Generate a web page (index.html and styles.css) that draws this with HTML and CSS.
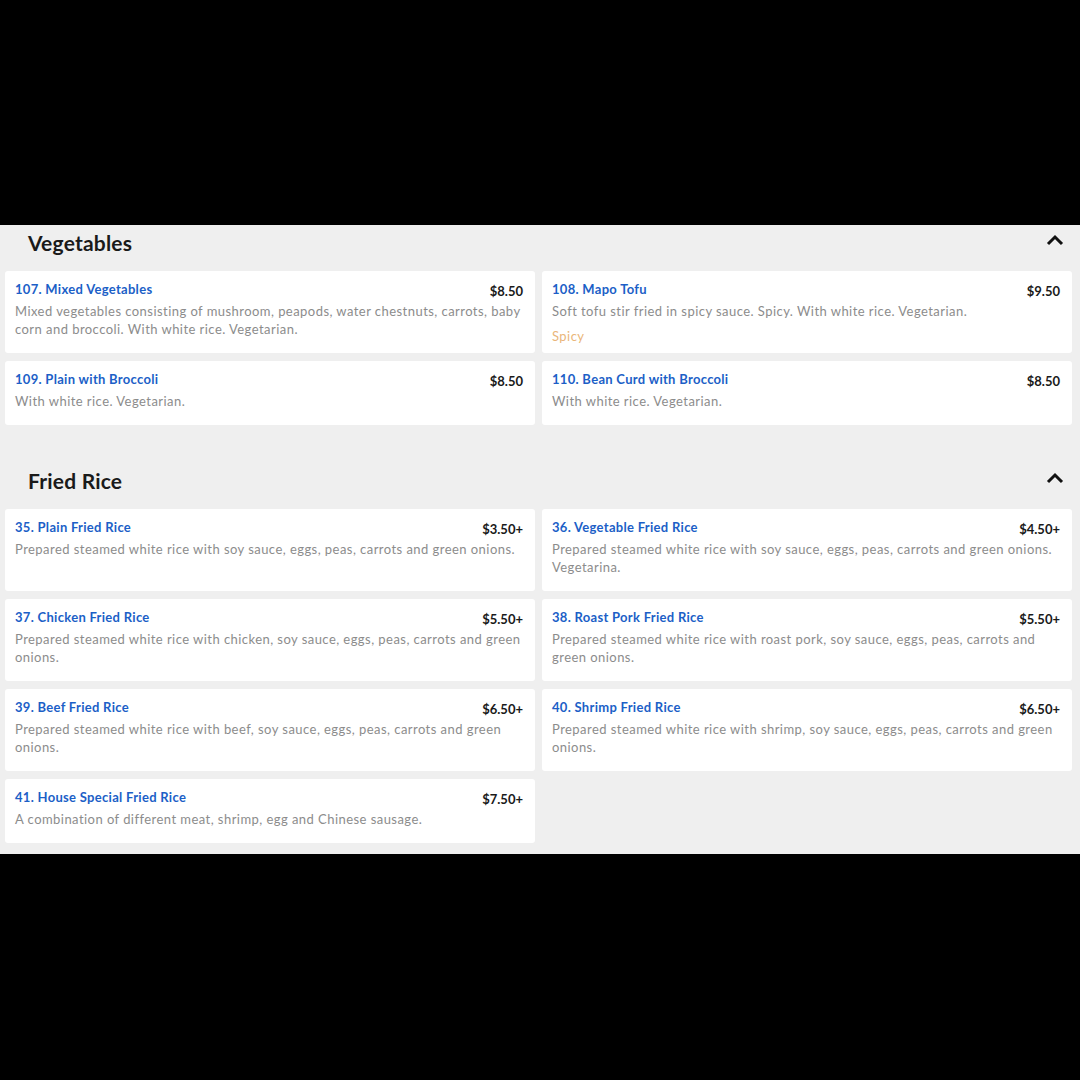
FILE: index.html
```html
<!DOCTYPE html>
<html lang="en">
<head>
    <meta charset="UTF-8">
    <meta name="viewport" content="width=device-width, initial-scale=1.0">
    <title>Menu</title>
    <link rel="stylesheet" href="styles.css">
</head>
<body>
    <div class="frame-top"></div>

    <main class="menu">
        <section class="category">
            <div class="category-head">
                <h2>Vegetables</h2>
                <svg class="chevron" width="18" height="12" viewBox="0 0 18 12"><path d="M2 10 L9 3 L16 10" fill="none" stroke="#111" stroke-width="3"/></svg>
            </div>
            <div class="items">
                <div class="item">
                    <div class="item-top">
                        <span class="item-name">107. Mixed Vegetables</span>
                        <span class="item-price">$8.50</span>
                    </div>
                    <p class="item-desc">Mixed vegetables consisting of mushroom, peapods, water chestnuts, carrots, baby corn and broccoli. With white rice. Vegetarian.</p>
                </div>
                <div class="item">
                    <div class="item-top">
                        <span class="item-name">108. Mapo Tofu</span>
                        <span class="item-price">$9.50</span>
                    </div>
                    <p class="item-desc">Soft tofu stir fried in spicy sauce. Spicy. With white rice. Vegetarian.</p>
                    <p class="item-tag">Spicy</p>
                </div>
                <div class="item">
                    <div class="item-top">
                        <span class="item-name">109. Plain with Broccoli</span>
                        <span class="item-price">$8.50</span>
                    </div>
                    <p class="item-desc">With white rice. Vegetarian.</p>
                </div>
                <div class="item">
                    <div class="item-top">
                        <span class="item-name">110. Bean Curd with Broccoli</span>
                        <span class="item-price">$8.50</span>
                    </div>
                    <p class="item-desc">With white rice. Vegetarian.</p>
                </div>
            </div>
        </section>

        <section class="category">
            <div class="category-head">
                <h2>Fried Rice</h2>
                <svg class="chevron" width="18" height="12" viewBox="0 0 18 12"><path d="M2 10 L9 3 L16 10" fill="none" stroke="#111" stroke-width="3"/></svg>
            </div>
            <div class="items">
                <div class="item">
                    <div class="item-top">
                        <span class="item-name">35. Plain Fried Rice</span>
                        <span class="item-price">$3.50+</span>
                    </div>
                    <p class="item-desc">Prepared steamed white rice with soy sauce, eggs, peas, carrots and green onions.</p>
                </div>
                <div class="item">
                    <div class="item-top">
                        <span class="item-name">36. Vegetable Fried Rice</span>
                        <span class="item-price">$4.50+</span>
                    </div>
                    <p class="item-desc">Prepared steamed white rice with soy sauce, eggs, peas, carrots and green onions. Vegetarina.</p>
                </div>
                <div class="item">
                    <div class="item-top">
                        <span class="item-name">37. Chicken Fried Rice</span>
                        <span class="item-price">$5.50+</span>
                    </div>
                    <p class="item-desc">Prepared steamed white rice with chicken, soy sauce, eggs, peas, carrots and green onions.</p>
                </div>
                <div class="item">
                    <div class="item-top">
                        <span class="item-name">38. Roast Pork Fried Rice</span>
                        <span class="item-price">$5.50+</span>
                    </div>
                    <p class="item-desc">Prepared steamed white rice with roast pork, soy sauce, eggs, peas, carrots and green onions.</p>
                </div>
                <div class="item">
                    <div class="item-top">
                        <span class="item-name">39. Beef Fried Rice</span>
                        <span class="item-price">$6.50+</span>
                    </div>
                    <p class="item-desc">Prepared steamed white rice with beef, soy sauce, eggs, peas, carrots and green onions.</p>
                </div>
                <div class="item">
                    <div class="item-top">
                        <span class="item-name">40. Shrimp Fried Rice</span>
                        <span class="item-price">$6.50+</span>
                    </div>
                    <p class="item-desc">Prepared steamed white rice with shrimp, soy sauce, eggs, peas, carrots and green onions.</p>
                </div>
                <div class="item">
                    <div class="item-top">
                        <span class="item-name">41. House Special Fried Rice</span>
                        <span class="item-price">$7.50+</span>
                    </div>
                    <p class="item-desc">A combination of different meat, shrimp, egg and Chinese sausage.</p>
                </div>
            </div>
        </section>
    </main>
</body>
</html>
```

FILE: styles.css
```css
body {
    font-family: Lato, "Open Sans", sans-serif;
    background-color: #000;
    margin: 0;
    padding: 0;
}

.frame-top {
    height: 225px;
}

.menu {
    background-color: #efefef;
    padding: 0 8px 11px 5px;
}

.category + .category {
    margin-top: 38px;
}

.category-head {
    display: flex;
    justify-content: space-between;
    align-items: center;
    padding: 6px 8px 16px 23px;
    height: 24px;
}

.category-head h2 {
    margin: 0;
    font-size: 21px;
    font-weight: 700;
    color: #1a1a1a;
    line-height: 24px;
    letter-spacing: 0.2px;
}

.chevron {
    margin-top: -6px;
}

.items {
    display: grid;
    grid-template-columns: 1fr 1fr;
    gap: 8px 7px;
}

.item {
    background: white;
    border-radius: 3px;
    padding: 9px 11px 15px 10px;
}

.item-top {
    display: flex;
    justify-content: space-between;
    align-items: flex-start;
    margin-bottom: 2px;
}

.item-name {
    font-size: 13px;
    font-weight: 700;
    line-height: 18px;
    color: #1c5fc7;
    letter-spacing: 0.3px;
}

.item-price {
    font-size: 13px;
    font-weight: 700;
    line-height: 18px;
    color: #1a1a1a;
    padding-top: 2px;
    margin-right: 1px;
}

.item-desc {
    margin: 0;
    font-size: 13px;
    line-height: 18px;
    color: #8c8c8c;
    letter-spacing: 0.45px;
}

.item-tag {
    margin: 7px 0 -8px;
    font-size: 13px;
    line-height: 18px;
    color: #eab67a;
    letter-spacing: 0.45px;
}
```
